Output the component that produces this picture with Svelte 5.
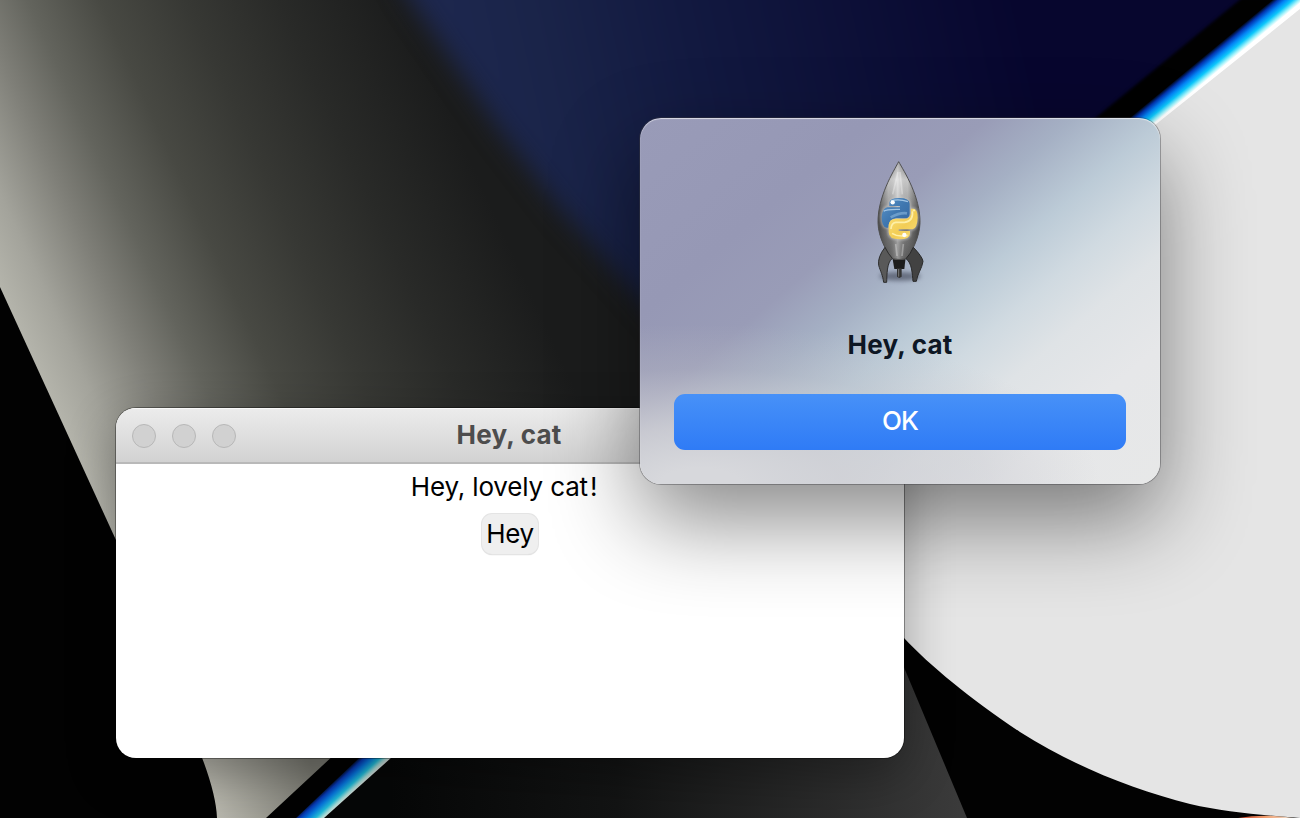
<script>
  let name = $state('cat');
</script>

<main class="desktop">
  <svg class="wallpaper" viewBox="0 0 1300 818" width="1300" height="818" aria-hidden="true">
    <defs>
      <linearGradient id="silver" gradientUnits="userSpaceOnUse" x1="-109.2" y1="337" x2="436.8" y2="86.8">
        <stop offset="0" stop-color="#b7b7ad" />
        <stop offset=".2" stop-color="#b4b4ab" />
        <stop offset=".265" stop-color="#a3a39b" />
        <stop offset=".36" stop-color="#7f7f78" />
        <stop offset=".44" stop-color="#63645d" />
        <stop offset=".55" stop-color="#484943" />
        <stop offset=".68" stop-color="#373834" />
        <stop offset=".82" stop-color="#292a28" />
        <stop offset="1" stop-color="#1b1c1c" />
      </linearGradient>
      <linearGradient id="navy" gradientUnits="userSpaceOnUse" x1="430" y1="100" x2="1010" y2="-30">
        <stop offset="0" stop-color="#1e2850" />
        <stop offset=".2" stop-color="#1a2449" />
        <stop offset=".45" stop-color="#121940" />
        <stop offset="1" stop-color="#07062e" />
      </linearGradient>
      <linearGradient id="beam" gradientUnits="userSpaceOnUse" x1="1273" y1="-1" x2="1291.5" y2="21.4">
        <stop offset="0" stop-color="#000" />
        <stop offset=".14" stop-color="#0235b0" />
        <stop offset=".3" stop-color="#0484f5" />
        <stop offset=".46" stop-color="#0cc7fb" />
        <stop offset=".6" stop-color="#9cf1fa" />
        <stop offset=".7" stop-color="#fff" />
        <stop offset=".84" stop-color="#fff" />
        <stop offset=".9" stop-color="#e5e5e5" />
      </linearGradient>
      <linearGradient id="beamLow" gradientUnits="userSpaceOnUse" x1="358" y1="757" x2="373.2" y2="773.4">
        <stop offset="0" stop-color="#000" />
        <stop offset=".22" stop-color="#0739b4" />
        <stop offset=".45" stop-color="#0778dd" />
        <stop offset=".7" stop-color="#20b9d8" />
        <stop offset=".88" stop-color="#a5dcd8" />
        <stop offset="1" stop-color="#d3dedb" />
      </linearGradient>
      <linearGradient id="floor" gradientUnits="userSpaceOnUse" x1="390" y1="0" x2="960" y2="0">
        <stop offset="0" stop-color="#060707" />
        <stop offset=".4" stop-color="#131414" />
        <stop offset="1" stop-color="#3a3a3a" />
      </linearGradient>
      <linearGradient id="foot" gradientUnits="userSpaceOnUse" x1="210" y1="790" x2="310" y2="760">
        <stop offset="0" stop-color="#b8b7ad" />
        <stop offset="1" stop-color="#77776f" />
      </linearGradient>
      <linearGradient id="ember" x1="0" x2="1" y1="0" y2="0">
        <stop offset="0" stop-color="#c8422a" />
        <stop offset=".5" stop-color="#f2a070" />
        <stop offset="1" stop-color="#eee2d4" />
      </linearGradient>
      <filter id="soft" x="-20%" y="-20%" width="140%" height="140%" color-interpolation-filters="sRGB">
        <feGaussianBlur stdDeviation="12" />
      </filter>
      <filter id="slight" color-interpolation-filters="sRGB"><feGaussianBlur stdDeviation="1.5" /></filter>
    </defs>
    <rect width="1300" height="818" fill="#020202" />
    <path d="M0 0H800V600H143.500L0 287Z" fill="url(#silver)" />
    <path d="M377 -60L411 0L500 130L560 208L640 298L720 390H1300V-60Z" fill="url(#navy)" filter="url(#soft)" />
    <path d="M1242 -2L1060 147H1300V-2Z" fill="#010101" filter="url(#slight)" />
    <path d="M1275 -2L1091 150H1160L1300 38V-2Z" fill="url(#beam)" />
    <path d="M1300 9L1100 169V440H880V612Q893 627 904 638C930 666 972 700 1020 732C1075 767 1135 790 1190 804C1225 812 1260 815 1300 818Z" fill="#e5e5e5" />
    <path d="M1238 818Q1265 813.500 1294 818Z" fill="url(#ember)" />
    <path d="M880 610L967 818H323L400 740Z" fill="url(#floor)" />
    <path d="M195 740Q216 790 217 818H266L350 740Z" fill="url(#foot)" />
    <path d="M378 740L296 818H324L411 740Z" fill="url(#beamLow)" />
  </svg>

  <section class="window">
    <header class="titlebar">
      <div class="lights"><i></i><i></i><i></i></div>
      <h1>Hey, {name}</h1>
    </header>
    <div class="content">
      <p>Hey, lovely {name}<span class="bang">!</span></p>
      <button class="hey">Hey</button>
    </div>
  </section>

  <section class="dialog" role="alertdialog" aria-labelledby="message">
    <svg class="rocket" viewBox="0 0 300 435" width="100" height="145" aria-hidden="true">
      <defs>
        <linearGradient id="hull" x1="0" x2="0" y1="0" y2="1">
          <stop offset="0" stop-color="#888" />
          <stop offset=".18" stop-color="#d8d8d8" />
          <stop offset=".4" stop-color="#b4b4b4" />
          <stop offset=".65" stop-color="#858585" />
          <stop offset="1" stop-color="#5c5c5c" />
        </linearGradient>
        <linearGradient id="round" x1="0" x2="1" y1="0" y2="0">
          <stop offset="0" stop-color="#222" stop-opacity=".65" />
          <stop offset=".25" stop-color="#444" stop-opacity=".12" />
          <stop offset=".47" stop-color="#fff" stop-opacity=".35" />
          <stop offset=".7" stop-color="#444" stop-opacity=".1" />
          <stop offset="1" stop-color="#222" stop-opacity=".7" />
        </linearGradient>
        <linearGradient id="blue" x1="0" x2="1" y1="0" y2="1">
          <stop offset="0" stop-color="#5b94c8" />
          <stop offset=".5" stop-color="#3f77b0" />
          <stop offset="1" stop-color="#34669f" />
        </linearGradient>
        <linearGradient id="gold" x1="0" x2="1" y1="0" y2="1">
          <stop offset="0" stop-color="#fbe17a" />
          <stop offset=".55" stop-color="#f2cd55" />
          <stop offset="1" stop-color="#f8dc7a" />
        </linearGradient>
        <filter id="haze" x="-30%" y="-80%" width="160%" height="260%" color-interpolation-filters="sRGB"><feGaussianBlur stdDeviation="6" /></filter>
        <filter id="glow" x="-20%" y="-20%" width="140%" height="140%" color-interpolation-filters="sRGB"><feGaussianBlur stdDeviation="3" /></filter>
        <filter id="sheen" x="-20%" y="-40%" width="140%" height="180%" color-interpolation-filters="sRGB"><feGaussianBlur stdDeviation="1.8" /></filter>
      </defs>
      <ellipse cx="150" cy="379" rx="62" ry="13" fill="#3a3f50" opacity=".6" filter="url(#haze)" />
      <path d="M127 322H167L163 357H133Z" fill="#1d1d1d" />
      <path d="M141 355H155V380L148 384L141 380Z" fill="#333" />
      <path d="M146 357V380" stroke="#777" stroke-width="3" />
      <path d="M146 35C163 65 211 140 210 218C209 263 184 307 170 326Q148 331 126 326C110 305 85 263 84 218C83 140 130 65 146 35Z" fill="url(#hull)" />
      <path d="M146 35C163 65 211 140 210 218C209 263 184 307 170 326Q148 331 126 326C110 305 85 263 84 218C83 140 130 65 146 35Z" fill="url(#round)" stroke="#505050" stroke-width="3" />
      <path d="M144 66L128 133M150 66L157 133M137 282L141 318M160 282L156 318" stroke="#fff" stroke-opacity=".3" stroke-width="5" filter="url(#sheen)" />
      <path d="M105 292Q82 322 86 346C92 366 98 374 101 397H110C111 374 110 338 127 325Q114 311 105 292Z" fill="#595959" stroke="#2d2d2d" stroke-width="3" />
      <path d="M190 292Q217 320 219 334C216 356 202 371 199 394H189C187 373 186 338 168 326Q182 311 190 292Z" fill="#424242" stroke="#292929" stroke-width="3" />
      <g fill="none" stroke="#ccc" stroke-opacity=".6" stroke-width="7" filter="url(#glow)">
        <path d="M118 163Q118 145 148 145Q179 145 179 164V200Q179 208 170 208H139Q120 208 117 232H109Q95 230 95 200Q97 173 112 170H118Z" />
        <path d="M182 176H191Q203 180 203 204Q203 233 187 239H180V249Q180 268 150 268Q116 268 116 246V222Q118 206 137 206H164Q182 206 182 190Z" />
      </g>
      <path d="M118 159Q118 144 148 144Q179 144 179 161V191Q178 205 164 205H138Q117 206 115 233H109Q95 230 95 201Q97 175 112 172H150V168H118Z" fill="url(#blue)" />
      <path d="M183 176H191Q203 178 203 203Q202 235 188 238H146V243H180V251Q179 268 149 268Q116 268 116 247V225Q118 206 138 206H163Q182 206 183 188Z" fill="url(#gold)" />
      <g fill="none" filter="url(#sheen)">
        <path d="M123 153Q145 145 174 155M101 184Q108 177 150 178" stroke="#bad8f1" stroke-opacity=".8" stroke-width="4" />
        <path d="M122 202Q150 187 171 190" stroke="#91bde1" stroke-opacity=".55" stroke-width="8" />
        <path d="M187 184Q191 213 164 217H137Q124 219 123 237M188 181H195" stroke="#fff5b4" stroke-opacity=".85" stroke-width="5" />
        <path d="M126 250Q145 262 173 256" stroke="#fff0a8" stroke-width="5" />
      </g>
      <circle cx="128" cy="157" r="6.500" fill="#fff" />
      <circle cx="163" cy="255" r="6.500" fill="#fff" />
    </svg>
    <h2 id="message">Hey, {name}</h2>
    <button class="ok">OK</button>
  </section>
</main>

<style>
  :global(body) { margin: 0; background: #000; }
  .desktop {
    position: relative;
    width: 1300px;
    height: 818px;
    overflow: hidden;
    font-family: Inter, "Liberation Sans", sans-serif;
  }
  .wallpaper { display: block; }
  h1, h2, p { margin: 0; }
  button { border: 0; padding: 0; font: inherit; }
  .window {
    position: absolute;
    left: 116px;
    top: 408px;
    width: 788px;
    height: 350px;
    border-radius: 20px;
    overflow: hidden;
    background: #fff;
    box-shadow: 0 0 0 1px rgba(0, 0, 0, .35), 0 16px 50px rgba(0, 0, 0, .32);
  }
  .titlebar {
    box-sizing: border-box;
    height: 56px;
    display: grid;
    grid-template-columns: 1fr auto 1fr;
    align-items: center;
    padding: 0 18px 0 16px;
    background: linear-gradient(#ececec, #d2d2d2);
    border-bottom: 2px solid #b9b9b9;
    box-shadow: inset 0 1px 0 #f8f8f8;
  }
  .lights { display: flex; gap: 16px; padding-top: 2px; }
  .lights i {
    box-sizing: border-box;
    width: 24px;
    height: 24px;
    border: 1px solid #b7b7b7;
    border-radius: 50%;
    background: #d1d1d1;
  }
  h1 { font-size: 26px; line-height: 32px; font-weight: 700; letter-spacing: .2px; color: #4d4d4d; }
  .content { display: flex; flex-direction: column; align-items: center; padding-top: 7px; color: #000; }
  .content p { font-size: 26px; line-height: 32px; padding-right: 12px; letter-spacing: -.15px; }
  .bang { padding-left: 2px; }
  .hey {
    width: 56px;
    height: 40px;
    margin-top: 11px;
    border-radius: 10px;
    background: #efefef;
    box-shadow: 0 0 0 1px #e4e4e4, 0 1px 1px #b5b5b5;
    font-size: 26px;
    line-height: 38px;
    letter-spacing: -.3px;
    color: #000;
  }
  .dialog {
    position: absolute;
    left: 640px;
    top: 118px;
    box-sizing: border-box;
    width: 520px;
    height: 366px;
    padding: 32px 34px 34px;
    display: flex;
    flex-direction: column;
    align-items: center;
    border-radius: 21px;
    background:
      radial-gradient(ellipse 400px 160px at 60px 100%, #d7d8dc 10%, rgba(208, 208, 213, .85) 35%, rgba(190, 190, 198, .3) 72%, rgba(180, 180, 190, 0)),
      linear-gradient(139.8deg, #999bb8 0, #9698b5 150px, #999cb7 225px, #a5b0c4 280px, #bccbd7 340px, #d0dae1 390px, #dfe3e6 440px, #e6e7e9 510px, #e7e8e8 615px);
    box-shadow: inset 0 1px 1px rgba(255, 255, 255, .65), 0 0 0 1px rgba(60, 60, 65, .4), 0 36px 88px rgba(0, 0, 0, .47);
  }
  .rocket { display: block; flex: none; }
  h2 { margin-top: 34px; font-size: 26px; line-height: 32px; font-weight: 700; letter-spacing: .2px; color: #0e1724; }
  .ok {
    width: 100%;
    height: 56px;
    margin-top: auto;
    border-radius: 11px;
    background: linear-gradient(#4791f8, #2f7bf6);
    color: #fff;
    font-size: 26px;
    font-weight: 500;
    line-height: 52px;
    padding-bottom: 2px;
    letter-spacing: -1px;
  }
</style>
